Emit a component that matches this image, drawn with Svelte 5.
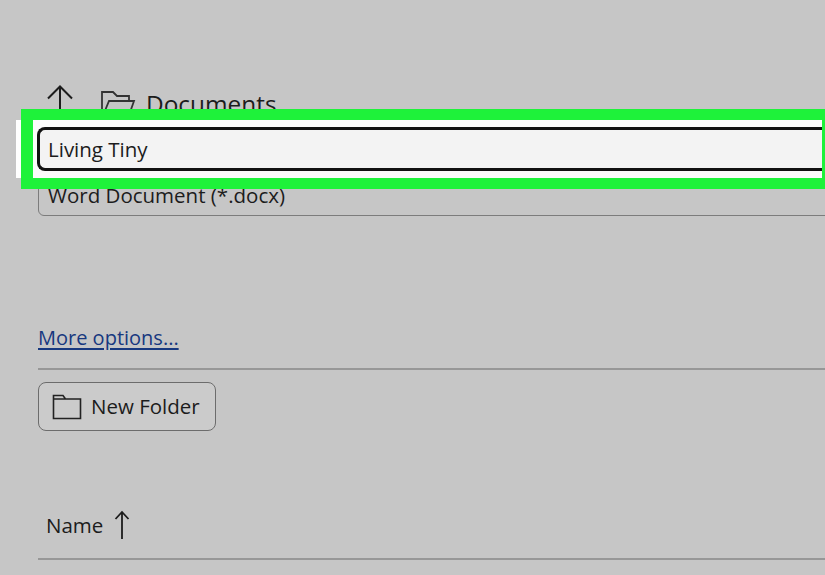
<script>
  const fileName = 'Living Tiny';
</script>

<div class="page">
  <header class="location">
    <svg class="up" width="28" height="32" viewBox="0 0 28 32" fill="none" stroke="#1c1c1c" stroke-width="2">
      <path d="M14 31V3M2 14.500L14 2.500L26 14.500" />
    </svg>
    <svg class="open-folder" width="36" height="30" viewBox="0 0 36 30" fill="none" stroke="#333" stroke-width="1.800">
      <path d="M2 28V2H13L17 6H29V11M2 28H28L34 11H9L2 28Z" />
    </svg>
    <span class="location-name">Documents</span>
  </header>

  <div class="type-select">Word Document (*.docx)</div>

  <a class="more" href="#more">More options...</a>
  <div class="rule rule-options"></div>

  <button class="new-folder">
    <svg width="30" height="26" viewBox="0 0 30 26" fill="none" stroke="#222" stroke-width="1.600">
      <path d="M1.500 24.500V1.500H11L13.500 5H28.500V24.500H1.500ZM1.500 5H13.500" />
    </svg>
    New Folder
  </button>

  <div class="column-head">
    <span>Name</span>
    <svg width="16" height="30" viewBox="0 0 16 30" fill="none" stroke="#1c1c1c" stroke-width="1.800">
      <path d="M8 29V2M1.500 9L8 2L14.500 9" />
    </svg>
  </div>
  <div class="rule"></div>

  <div class="highlight">
    <div class="name-field">
      <div class="name-input">{fileName}</div>
    </div>
  </div>
</div>

<style>
  :global(body) {
    margin: 0;
    background: #c6c6c6;
  }
  .page {
    position: relative;
    width: 825px;
    height: 575px;
    overflow: hidden;
    box-sizing: border-box;
    padding: 84px 0 0 38px;
    background: #c6c6c6;
    color: #1c1c1c;
    font-family: "Open Sans", "Noto Sans", sans-serif;
    font-size: 20.500px;
  }
  .location {
    display: flex;
    align-items: flex-start;
    height: 91px;
    padding-left: 8px;
  }
  .up {
    margin-right: 26px;
    flex: none;
  }
  .open-folder {
    margin: 6px 10px 0 0;
    flex: none;
  }
  .location-name {
    font-size: 24.400px;
    line-height: 40px;
  }
  .type-select {
    box-sizing: border-box;
    height: 41px;
    margin-right: -10px;
    padding: 2px 0 0 9px;
    border: 1px solid #7c7c7c;
    border-radius: 6px;
    line-height: 34px;
  }
  .more {
    display: block;
    width: fit-content;
    margin-top: 107px;
    color: #17387f;
    font-size: 20px;
    line-height: 30px;
    text-decoration: underline;
    text-underline-offset: 3px;
  }
  .rule {
    height: 2px;
    background: #979797;
    margin-right: -10px;
  }
  .rule-options {
    margin-top: 15px;
  }
  .new-folder {
    display: flex;
    align-items: center;
    gap: 9px;
    box-sizing: border-box;
    width: 178px;
    height: 49px;
    margin-top: 12px;
    padding: 0 0 2px 13px;
    border: 1px solid #6c6c6c;
    border-radius: 8px;
    background: #cbcbcb;
    color: #1c1c1c;
    font: inherit;
  }
  .new-folder svg {
    flex: none;
    margin-top: 2px;
  }
  .column-head {
    display: flex;
    align-items: center;
    gap: 11px;
    height: 34px;
    margin-top: 77px;
    padding-left: 8px;
  }
  .column-head + .rule {
    margin-top: 16px;
  }
  .highlight {
    position: absolute;
    left: 21px;
    top: 109px;
    box-sizing: border-box;
    width: 804px;
    height: 80px;
    border: solid #1ef23a;
    border-width: 11px 3px 11px 12px;
  }
  .highlight::before {
    content: "";
    position: absolute;
    left: -17px;
    top: 0;
    width: 5px;
    height: 58px;
    background: #fff;
  }
  .name-field {
    box-sizing: border-box;
    height: 100%;
    padding: 7px 0 7px 4px;
    background: #fbfbfb;
  }
  .name-input {
    box-sizing: border-box;
    height: 44px;
    padding-left: 8px;
    border: solid #111;
    border-width: 3px 0 3px 3px;
    border-radius: 8px 0 0 8px;
    background: #f3f3f3;
    line-height: 38px;
  }
</style>
